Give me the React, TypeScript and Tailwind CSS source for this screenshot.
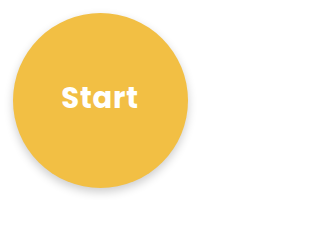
export default function App() {
  return (
    <div className="w-[200px] h-[200px] bg-white flex items-center justify-center">
      <button className="w-[175px] h-[175px] rounded-full bg-[#f2bf44] shadow-[0_4px_10px_rgba(0,0,0,0.2)] flex items-center justify-center">
        <span className="text-white text-[29px] font-bold font-['Poppins','Inter',sans-serif] tracking-[0.8px] leading-none -mt-[4px]">
          Start
        </span>
      </button>
    </div>
  )
}
